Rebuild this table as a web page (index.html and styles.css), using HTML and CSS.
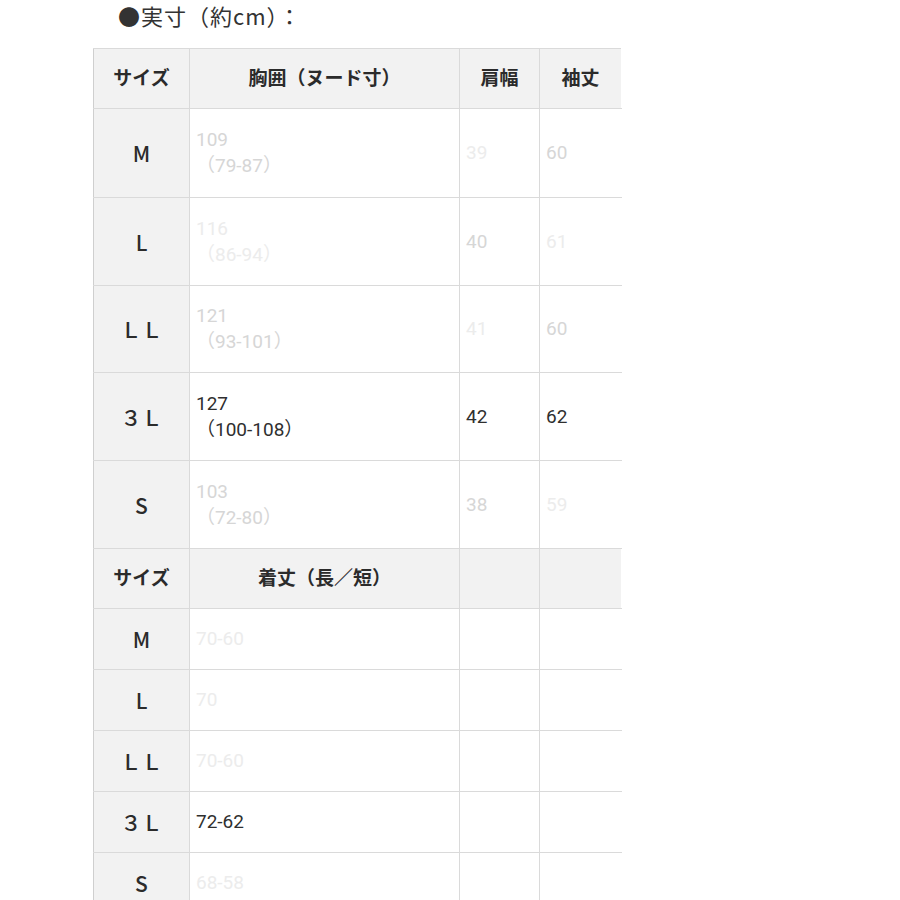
FILE: index.html
```html
<!DOCTYPE html>
<html lang="ja">
<head>
<meta charset="utf-8">
<title>実寸</title>
<link rel="stylesheet" href="styles.css">
</head>
<body>
<div class="page">
  <p class="title">●実寸（約cm）：</p>
  <table class="sizes">
    <colgroup>
      <col class="c-size"><col class="c-main"><col class="c-sh"><col class="c-sl">
    </colgroup>
    <tr class="head">
      <th>サイズ</th><th>胸囲（ヌード寸）</th><th>肩幅</th><th>袖丈</th>
    </tr>
    <tr class="tall r89">
      <th>M</th><td class="fade">109<br>（79-87）</td><td class="ghost">39</td><td class="fade">60</td>
    </tr>
    <tr class="tall r88">
      <th>L</th><td class="ghost">116<br>（86-94）</td><td class="fade">40</td><td class="ghost">61</td>
    </tr>
    <tr class="tall r87">
      <th>ＬＬ</th><td class="fade">121<br>（93-101）</td><td class="ghost">41</td><td class="fade">60</td>
    </tr>
    <tr class="tall r88">
      <th>３Ｌ</th><td>127<br>（100-108）</td><td>42</td><td>62</td>
    </tr>
    <tr class="tall r88">
      <th>S</th><td class="fade">103<br>（72-80）</td><td class="fade">38</td><td class="ghost">59</td>
    </tr>
    <tr class="head">
      <th>サイズ</th><th>着丈（長／短）</th><th></th><th></th>
    </tr>
    <tr class="short">
      <th>M</th><td class="ghost">70-60</td><td></td><td></td>
    </tr>
    <tr class="short">
      <th>L</th><td class="ghost">70</td><td></td><td></td>
    </tr>
    <tr class="short">
      <th>ＬＬ</th><td class="ghost">70-60</td><td></td><td></td>
    </tr>
    <tr class="short">
      <th>３Ｌ</th><td>72-62</td><td></td><td></td>
    </tr>
    <tr class="short">
      <th>S</th><td class="ghost">68-58</td><td></td><td></td>
    </tr>
  </table>
</div>
</body>
</html>
```

FILE: styles.css
```css
html, body {
  margin: 0;
  padding: 0;
  background: #ffffff;
}

body {
  font-family: Roboto, "Noto Sans CJK JP", "Noto Sans", sans-serif;
  color: #333333;
}

.page {
  padding-left: 93px;
  height: 900px;
  overflow: hidden;
}

.title {
  margin: 0;
  padding: 0 0 0 25px;
  height: 48px;
  font-size: 22px;
  line-height: 30px;
  letter-spacing: 1px;
  color: #333333;
  font-family: "Noto Sans CJK JP", sans-serif;
}

.sizes {
  border-collapse: collapse;
  table-layout: fixed;
  width: 528px;
}

.c-size { width: 96px; }
.c-main { width: 270px; }
.c-sh { width: 80px; }
.c-sl { width: 82px; }

.sizes th,
.sizes td {
  border: 1px solid #dadada;
  padding: 0 6px;
  vertical-align: middle;
  box-sizing: border-box;
}

.sizes tr > :last-child {
  border-right-color: #ffffff;
}

.sizes th {
  background: #f2f2f2;
  font-weight: 700;
  text-align: center;
  font-family: "Noto Sans CJK JP", sans-serif;
  color: #2b2b2b;
}

.sizes td {
  text-align: left;
  font-size: 19px;
  line-height: 26px;
  color: #2f2f2f;
  background: #ffffff;
}

.sizes tr > th:first-child {
  border-left: 1px solid #cfcfcf;
  font-size: 21px;
  font-weight: 500;
  padding: 0;
}

.head th {
  font-size: 19px;
  height: 60px;
  padding: 0 0 4px;
}

.sizes .head th:first-child {
  font-size: 19px;
  font-weight: 700;
  padding-bottom: 4px;
}

.r89 > * { height: 89px; }
.r88 > * { height: 88px; }
.r87 > * { height: 87px; }
.short > * { height: 61px; }

.sizes td.fade {
  color: #d6d6d6;
}

.sizes td.ghost {
  color: #ececec;
}
```
